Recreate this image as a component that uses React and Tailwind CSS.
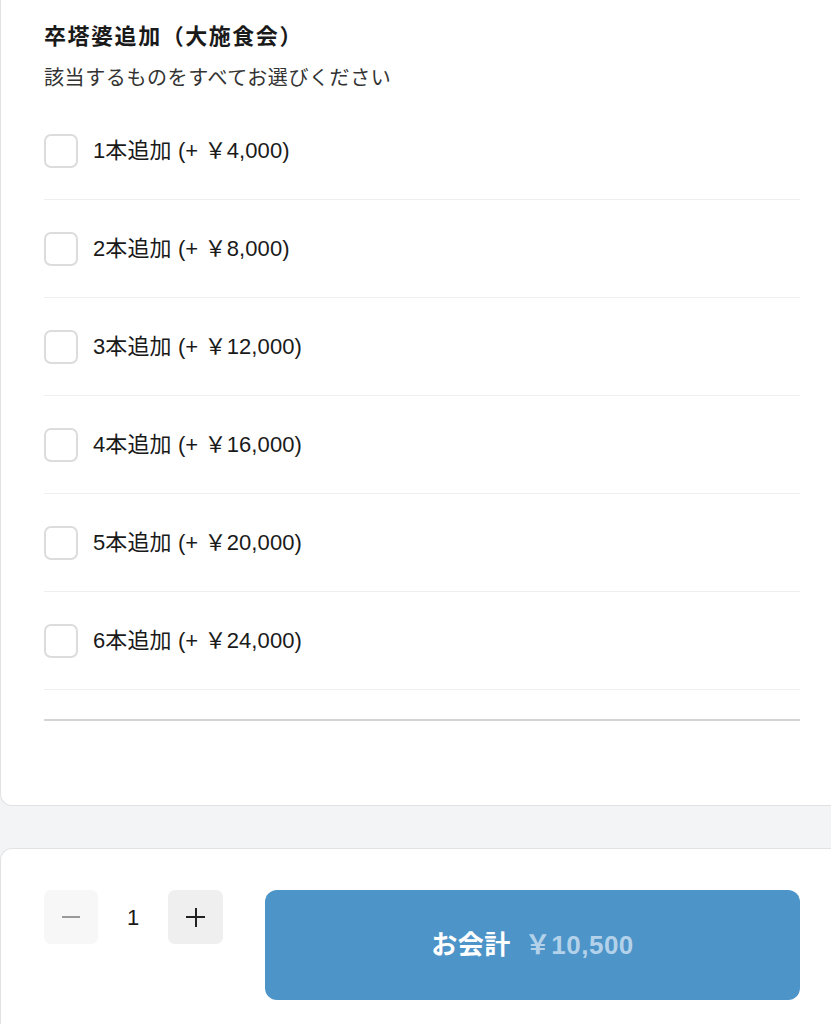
import { useState } from 'react';

const options = [
  { n: 1, price: '4,000' },
  { n: 2, price: '8,000' },
  { n: 3, price: '12,000' },
  { n: 4, price: '16,000' },
  { n: 5, price: '20,000' },
  { n: 6, price: '24,000' },
];

const font = { fontFamily: '"Liberation Sans", "Noto Sans CJK JP", sans-serif' };

const App = () => {
  const [checked, setChecked] = useState({});
  const [qty, setQty] = useState(1);

  return (
    <div className="min-h-screen bg-[#f3f4f6] text-[#1a1a1a]" style={font}>
      <div className="bg-white border-b border-l border-[#e2e2e2] rounded-bl-xl pl-[43px] pr-[31px] pt-[22px] pb-[84px]">
        <h2 className="text-[22px] font-bold leading-[30px] tracking-[0.07em]">卒塔婆追加（大施食会）</h2>
        <p className="mt-[13px] text-[20px] leading-[26px] text-[#333] tracking-[0.03em]">該当するものをすべてお選びください</p>
        <div className="mt-[11px]">
          {options.map((o) => (
            <label key={o.n} className="flex items-center gap-[15px] h-[98px] border-b border-[#efefef] cursor-pointer">
              <input
                type="checkbox"
                className="appearance-none w-[34px] h-[34px] rounded-[7px] border-2 border-[#dcdcdc] bg-white checked:bg-[#4d94c8] checked:border-[#4d94c8]"
                checked={!!checked[o.n]}
                onChange={() => setChecked({ ...checked, [o.n]: !checked[o.n] })}
              />
              <span className="text-[22px] leading-none tracking-[0.005em]">{o.n}本追加 (+ ￥{o.price})</span>
            </label>
          ))}
        </div>
        <div className="mt-[29px] h-[2px] bg-[#d4d4d4]" />
      </div>
      <div className="h-[42px]" />
      <div className="bg-white border-t border-l border-[#e2e2e2] rounded-tl-xl flex items-start pl-[43px] pr-[31px] pt-[41px] pb-[30px]">
        <div className="flex items-center">
          <button
            className="w-[54px] h-[54px] rounded-[7px] bg-[#f7f7f7] flex items-center justify-center"
            onClick={() => setQty(Math.max(1, qty - 1))}
          >
            <span className="block w-[18px] h-[2px] bg-[#9a9a9a]" />
          </button>
          <span className="w-[70px] text-center text-[22px]">{qty}</span>
          <button
            className="w-[55px] h-[54px] rounded-[7px] bg-[#efefef] flex items-center justify-center relative"
            onClick={() => setQty(qty + 1)}
          >
            <span className="block w-[19px] h-[2px] bg-[#222]" />
            <span className="absolute block w-[2px] h-[19px] bg-[#222]" />
          </button>
        </div>
        <button className="ml-[42px] flex-1 h-[110px] rounded-[12px] bg-[#4d94c8] flex items-center justify-center gap-[14px] text-[26px] font-bold tracking-[0.02em]">
          <span className="text-white">お会計</span>
          <span className="text-[#b3d2ea]">￥10,500</span>
        </button>
      </div>
    </div>
  );
};

export default App;
